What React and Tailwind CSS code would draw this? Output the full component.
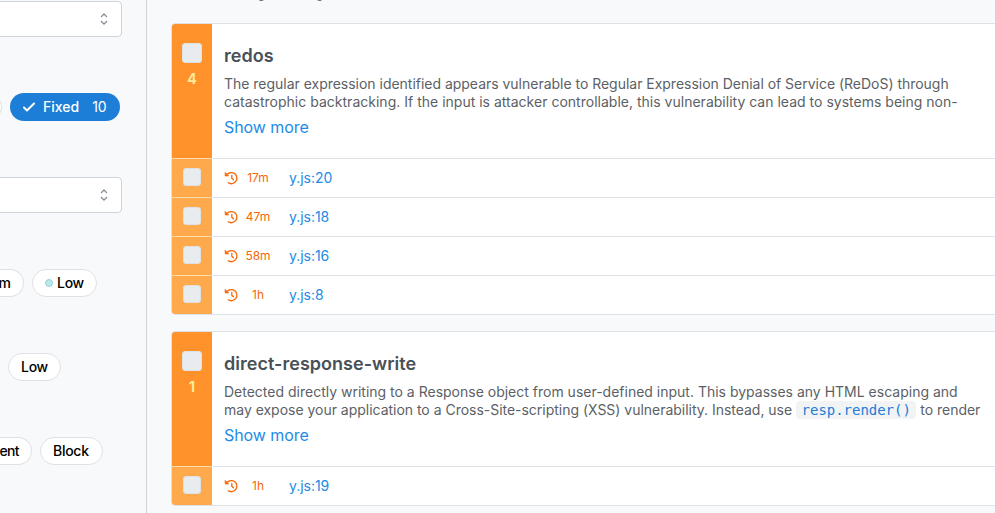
import React from "react";

const pill =
  "flex h-7 shrink-0 items-center rounded-full border border-[#dee2e6] bg-white px-3 text-sm font-medium tracking-[-0.02em] text-black";

const leftPill =
  "flex h-7 shrink-0 items-center rounded-r-full border border-l-0 border-[#dee2e6] bg-white pr-3 text-sm font-medium text-black";

function Selector() {
  return (
    <svg viewBox="0 0 10 16" className="h-4 w-2.5" fill="none" stroke="#868e96" strokeWidth="1.3">
      <path d="M2 6 5 3 8 6M2 10 5 13 8 10" />
    </svg>
  );
}

function Select() {
  return (
    <div className="flex h-9 w-[152px] shrink-0 items-center justify-end rounded border border-[#ced4da] bg-white pr-3">
      <Selector />
    </div>
  );
}

function History() {
  return (
    <svg viewBox="0 0 14 14" className="size-3.5 shrink-0" fill="none" stroke="#f76707" strokeWidth="1.3" strokeLinecap="round" strokeLinejoin="round">
      <path d="M3.2 3.3A5.6 5.6 0 1 1 4.2 11.8" />
      <path d="M1.2 1.7V4.9H4.4Z" fill="#f76707" strokeWidth="0.8" />
      <path d="M7.8 4.4V7.2L9.4 8.8" />
    </svg>
  );
}

function Row({ age, file }) {
  return (
    <div className="flex h-[39px] border-t border-[#dee2e6]">
      <div className="flex w-10 shrink-0 justify-center bg-[#ffa94d] pt-[9px] shadow-[0_-1px_0_#ffdcae]">
        <div className="size-[18px] rounded-[3px] border border-[#dee2e6] bg-[#e9ecef]" />
      </div>
      <div className="flex items-center pl-3">
        <History />
        <span className="ml-1 w-8 text-center text-xs text-[#f76707]">{age}</span>
        <span className="ml-[15px] text-sm tracking-[-0.03px] text-[#228be6]">{file}</span>
      </div>
    </div>
  );
}

function Card({ count, title, children, rows }) {
  return (
    <section className="flex w-[1000px] shrink-0 flex-col overflow-hidden rounded border border-[#dee2e6] bg-white">
      <div className="flex h-[134px]">
        <div className="flex w-10 shrink-0 flex-col items-center bg-[#ff922b] pt-[19px]">
          <div className="size-5 rounded-[3px] border border-[#dee2e6] bg-[#e9ecef]" />
          <span className="mt-[5px] text-sm font-bold leading-[22px] text-[#ffec99]">{count}</span>
        </div>
        <div className="pl-3 pt-5">
          <h2 className="text-lg font-semibold leading-6 tracking-[0.03px] text-[#495057]">{title}</h2>
          <div className="mt-[7px] whitespace-nowrap text-sm leading-[18px] text-[#5c5f66]">{children}</div>
          <a className="mt-1 block text-base leading-6 tracking-[-0.06px] text-[#228be6]">Show more</a>
        </div>
      </div>
      {rows.map(([age, file]) => (
        <Row key={file} age={age} file={file} />
      ))}
    </section>
  );
}

export default function App() {
  return (
    <div className="flex h-[513px] w-[995px] overflow-hidden bg-[#f8f9fb] font-['Inter',sans-serif]">
      <aside className="flex w-[147px] shrink-0 flex-col overflow-hidden border-r border-[#ced4da] pt-px">
        <div className="-ml-[30px]">
          <Select />
        </div>
        <div className="mt-14 -ml-5 flex gap-2">
          <div className="h-7 w-[22px] shrink-0 rounded-r-full border border-[#dee2e6] bg-white" />
          <div className="flex h-7 w-[110px] items-center rounded-full bg-[#1c7ed6] pl-3 text-sm font-medium text-white">
            <svg viewBox="0 0 14 12" className="mr-[7px] h-3 w-3.5" fill="none" stroke="white" strokeWidth="2" strokeLinecap="round" strokeLinejoin="round">
              <path d="M2 6.5 5 9.5 12 2.5" />
            </svg>
            Fixed
            <span className="ml-[13px] font-normal">10</span>
          </div>
        </div>
        <div className="mt-14 -ml-[30px]">
          <Select />
        </div>
        <div className="mt-14 flex h-7 w-[97px] justify-between">
          <div className={leftPill + " w-6 justify-end"}>m</div>
          <div className={pill + " w-[65px]"}>
            <span className="mr-1 size-2 shrink-0 rounded-full border border-[#99d0d8] bg-[#b7e9ec]" />
            Low
          </div>
        </div>
        <div className="mt-14 flex h-7 w-[61px] justify-end">
          <div className={pill + " w-[53px]"}>Low</div>
        </div>
        <div className="mt-14 flex h-7 w-[103px] justify-between">
          <div className={leftPill + " w-8 justify-end"}>
            <span className="tracking-[-0.6px]">ent</span>
          </div>
          <div className={pill + " w-[63px]"}>Block</div>
        </div>
      </aside>
      <main className="flex flex-col gap-4 overflow-hidden pl-6">
        <h1 className="-mt-6 h-[31px] w-[162px] whitespace-nowrap text-right text-base font-semibold leading-[30px] text-black">
          Matching findings
        </h1>
        <Card
          count="4"
          title="redos"
          rows={[
            ["17m", "y.js:20"],
            ["47m", "y.js:18"],
            ["58m", "y.js:16"],
            ["1h", "y.js:8"],
          ]}
        >
          <p className="tracking-[-0.02px]">
            The regular expression identified appears vulnerable to Regular Expression Denial of Service (ReDoS) through
          </p>
          <p className="tracking-[0.01px]">
            catastrophic backtracking. If the input is attacker controllable, this vulnerability can lead to systems being non-
          </p>
        </Card>
        <Card count="1" title="direct-response-write" rows={[["1h", "y.js:19"]]}>
          <p>
            Detected directly writing to a Response object from user-defined input. This bypasses any HTML escaping and
          </p>
          <p className="flex h-[18px] items-center tracking-[-0.02px]">
            may expose your application to a Cross-Site-scripting (XSS) vulnerability. Instead, use
            <code className="mx-1 h-[18px] rounded bg-[#f1f3f5] px-[5.5px] font-['DejaVu_Sans_Mono',monospace] text-sm leading-[18px] tracking-[-0.03px] text-[#1c7ed6]">
              resp.render()
            </code>
            to render
          </p>
        </Card>
      </main>
    </div>
  );
}
